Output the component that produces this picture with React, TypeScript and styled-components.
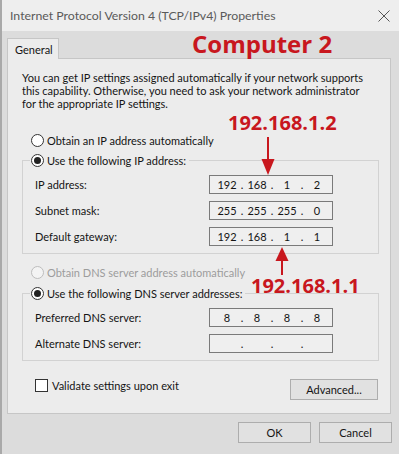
import React from "react";
import styled, { createGlobalStyle } from "styled-components";

const GlobalStyle = createGlobalStyle`
  html, body { margin: 0; padding: 0; width: 399px; height: 454px; overflow: hidden; background: #dcdcdc; }
  #root { width: 399px; height: 454px; }
  * { box-sizing: border-box; }
`;

const RED = "#c8171e";

const Window = styled.div`
  position: relative;
  width: 399px;
  height: 454px;
  display: flex;
  flex-direction: column;
  background: #dcdcdc;
  border-left: 2px solid #a9a9a9;
  font-family: Lato, "Noto Sans", sans-serif;
  font-size: 11px;
  color: #141414;
`;

const TitleBar = styled.div`
  height: 31px;
  flex: none;
  display: flex;
  align-items: center;
  justify-content: space-between;
  padding: 0 9px 0 8px;
  background: #eeeeee;
`;

const Title = styled.span`
  font-size: 12.3px;
  color: #5a5a5a;
`;

const Body = styled.div`
  display: flex;
  flex-direction: column;
  padding: 7px 8px 0 5px;
`;

const TabStrip = styled.div`
  display: flex;
  height: 20px;
`;

const Tab = styled.div`
  width: 52px;
  height: 21px;
  display: flex;
  align-items: center;
  padding-left: 7px;
  background: #ececec;
  border: 1px solid #c6c6c6;
  border-bottom: none;
  position: relative;
  z-index: 1;
`;

const Panel = styled.div`
  background: #ececec;
  border: 1px solid #c6c6c6;
  padding: 12px 10px 13px 14px;
  display: flex;
  flex-direction: column;
`;

const Description = styled.p`
  margin: 0;
  line-height: 13px;
`;

const OptionRow = styled.label<{ $disabled?: boolean; $top: number }>`
  display: flex;
  align-items: center;
  gap: 3px;
  height: 14px;
  margin: ${(p) => p.$top}px 0 0 9px;
  color: ${(p) => (p.$disabled ? "#9c9c9c" : "inherit")};
`;

const Radio = styled.span<{ $checked?: boolean; $disabled?: boolean }>`
  width: 13px;
  height: 13px;
  border-radius: 50%;
  border: 1px solid ${(p) => (p.$disabled ? "#bdbdbd" : "#333")};
  background: ${(p) => (p.$disabled ? "#f3f3f3" : "#fff")};
  display: flex;
  align-items: center;
  justify-content: center;
  flex: none;
  &::after {
    content: "";
    display: ${(p) => (p.$checked ? "block" : "none")};
    width: 7px;
    height: 7px;
    border-radius: 50%;
    background: #222;
  }
`;

const Group = styled.fieldset<{ $top: number }>`
  margin: ${(p) => p.$top}px 1px 0 0;
  padding: 0;
  border: 1px solid #d2d2d2;
  min-width: 0;
`;

const Legend = styled.legend`
  margin-left: 7px;
  padding: 0 3px 0 1px;
  height: 14px;
  display: flex;
  align-items: center;
  gap: 3px;
`;

const Rows = styled.div`
  display: flex;
  flex-direction: column;
  gap: 7px;
  padding: 8px 0 7px 12px;
`;

const FieldRow = styled.div`
  display: flex;
  align-items: center;
`;

const FieldLabel = styled.span`
  width: 174px;
`;

const IpBox = styled.div`
  width: 124px;
  height: 19px;
  border: 1px solid #7a7a7a;
  background: #efefef;
  display: flex;
  align-items: center;
  padding-left: 5px;
`;

const Octet = styled.span`
  width: 24px;
  text-align: center;
`;

const Dot = styled.span`
  width: 6px;
  text-align: center;
`;

const PanelFooter = styled.div`
  display: flex;
  justify-content: space-between;
  align-items: flex-start;
  margin-top: 18px;
`;

const CheckRow = styled.label`
  display: flex;
  align-items: center;
  gap: 4px;
  margin: 0 0 0 13px;
  height: 13px;
`;

const CheckBox = styled.span`
  width: 13px;
  height: 13px;
  border: 1px solid #333;
  background: #fff;
`;

const Button = styled.button<{ $width: number; $right?: number }>`
  width: ${(p) => p.$width}px;
  height: 21px;
  margin: 0 ${(p) => p.$right ?? 0}px 0 0;
  padding: 0;
  border: 1px solid #adadad;
  background: #e1e1e1;
  font-family: inherit;
  font-size: 11px;
  color: #141414;
`;

const Footer = styled.div`
  display: flex;
  justify-content: flex-end;
  gap: 8px;
  margin: 8px -1px 0 0;
`;

const Annotation = styled.div<{ $size: number; $left: number; $top: number }>`
  position: absolute;
  left: ${(p) => p.$left}px;
  top: ${(p) => p.$top}px;
  font-family: "Open Sans", "Noto Sans", sans-serif;
  font-weight: 700;
  font-size: ${(p) => p.$size}px;
  line-height: 1;
  color: ${RED};
  white-space: nowrap;
`;

const ArrowSvg = styled.svg<{ $left: number; $top: number }>`
  position: absolute;
  left: ${(p) => p.$left}px;
  top: ${(p) => p.$top}px;
`;

type Ip = string[];

const IpField: React.FC<{ ip: Ip }> = ({ ip }) => (
  <IpBox>
    {ip.map((o, i) => (
      <React.Fragment key={i}>
        <Octet>{o}</Octet>
        {i < 3 && <Dot>.</Dot>}
      </React.Fragment>
    ))}
  </IpBox>
);

const ipRows = [
  { label: "IP address:", ip: ["192", "168", "1", "2"] },
  { label: "Subnet mask:", ip: ["255", "255", "255", "0"] },
  { label: "Default gateway:", ip: ["192", "168", "1", "1"] },
];

const dnsRows = [
  { label: "Preferred DNS server:", ip: ["8", "8", "8", "8"] },
  { label: "Alternate DNS server:", ip: ["", "", "", ""] },
];

export default function App() {
  return (
    <>
      <GlobalStyle />
      <Window>
        <TitleBar>
          <Title>Internet Protocol Version 4 (TCP/IPv4) Properties</Title>
          <svg width="12" height="12" viewBox="0 0 12 12">
            <path d="M0.5 0.5 L11.5 11.5 M11.5 0.5 L0.5 11.5" stroke="#555" strokeWidth="1" fill="none" />
          </svg>
        </TitleBar>
        <Body>
          <TabStrip>
            <Tab>General</Tab>
          </TabStrip>
          <Panel>
            <Description>
              You can get IP settings assigned automatically if your network supports
              <br />
              this capability. Otherwise, you need to ask your network administrator
              <br />
              for the appropriate IP settings.
            </Description>
            <OptionRow $top={23}>
              <Radio />
              Obtain an IP address automatically
            </OptionRow>
            <Group $top={6}>
              <Legend>
                <Radio $checked />
                Use the following IP address:
              </Legend>
              <Rows>
                {ipRows.map((r) => (
                  <FieldRow key={r.label}>
                    <FieldLabel>{r.label}</FieldLabel>
                    <IpField ip={r.ip} />
                  </FieldRow>
                ))}
              </Rows>
            </Group>
            <OptionRow $top={11} $disabled>
              <Radio $disabled />
              Obtain DNS server address automatically
            </OptionRow>
            <Group $top={7}>
              <Legend>
                <Radio $checked />
                Use the following DNS server addresses:
              </Legend>
              <Rows>
                {dnsRows.map((r) => (
                  <FieldRow key={r.label}>
                    <FieldLabel>{r.label}</FieldLabel>
                    <IpField ip={r.ip} />
                  </FieldRow>
                ))}
              </Rows>
            </Group>
            <PanelFooter>
              <CheckRow>
                <CheckBox />
                Validate settings upon exit
              </CheckRow>
              <Button $width={88} $right={2}>Advanced...</Button>
            </PanelFooter>
          </Panel>
          <Footer>
            <Button $width={73}>OK</Button>
            <Button $width={73}>Cancel</Button>
          </Footer>
        </Body>

        <Annotation $size={24} $left={190} $top={32}>Computer 2</Annotation>
        <Annotation $size={20} $left={226} $top={113}>192.168.1.2</Annotation>
        <Annotation $size={20} $left={249} $top={276}>192.168.1.1</Annotation>
        <ArrowSvg $left={258} $top={135} width="16" height="42" viewBox="0 0 16 42">
          <line x1="8" y1="2" x2="8" y2="26" stroke={RED} strokeWidth="2" />
          <polygon points="1.5,24 14.5,24 8,40" fill={RED} />
        </ArrowSvg>
        <ArrowSvg $left={272} $top={245} width="16" height="32" viewBox="0 0 16 32">
          <line x1="8" y1="14" x2="8" y2="30" stroke={RED} strokeWidth="2" />
          <polygon points="1.5,16 14.5,16 8,2" fill={RED} />
        </ArrowSvg>
      </Window>
    </>
  );
}
